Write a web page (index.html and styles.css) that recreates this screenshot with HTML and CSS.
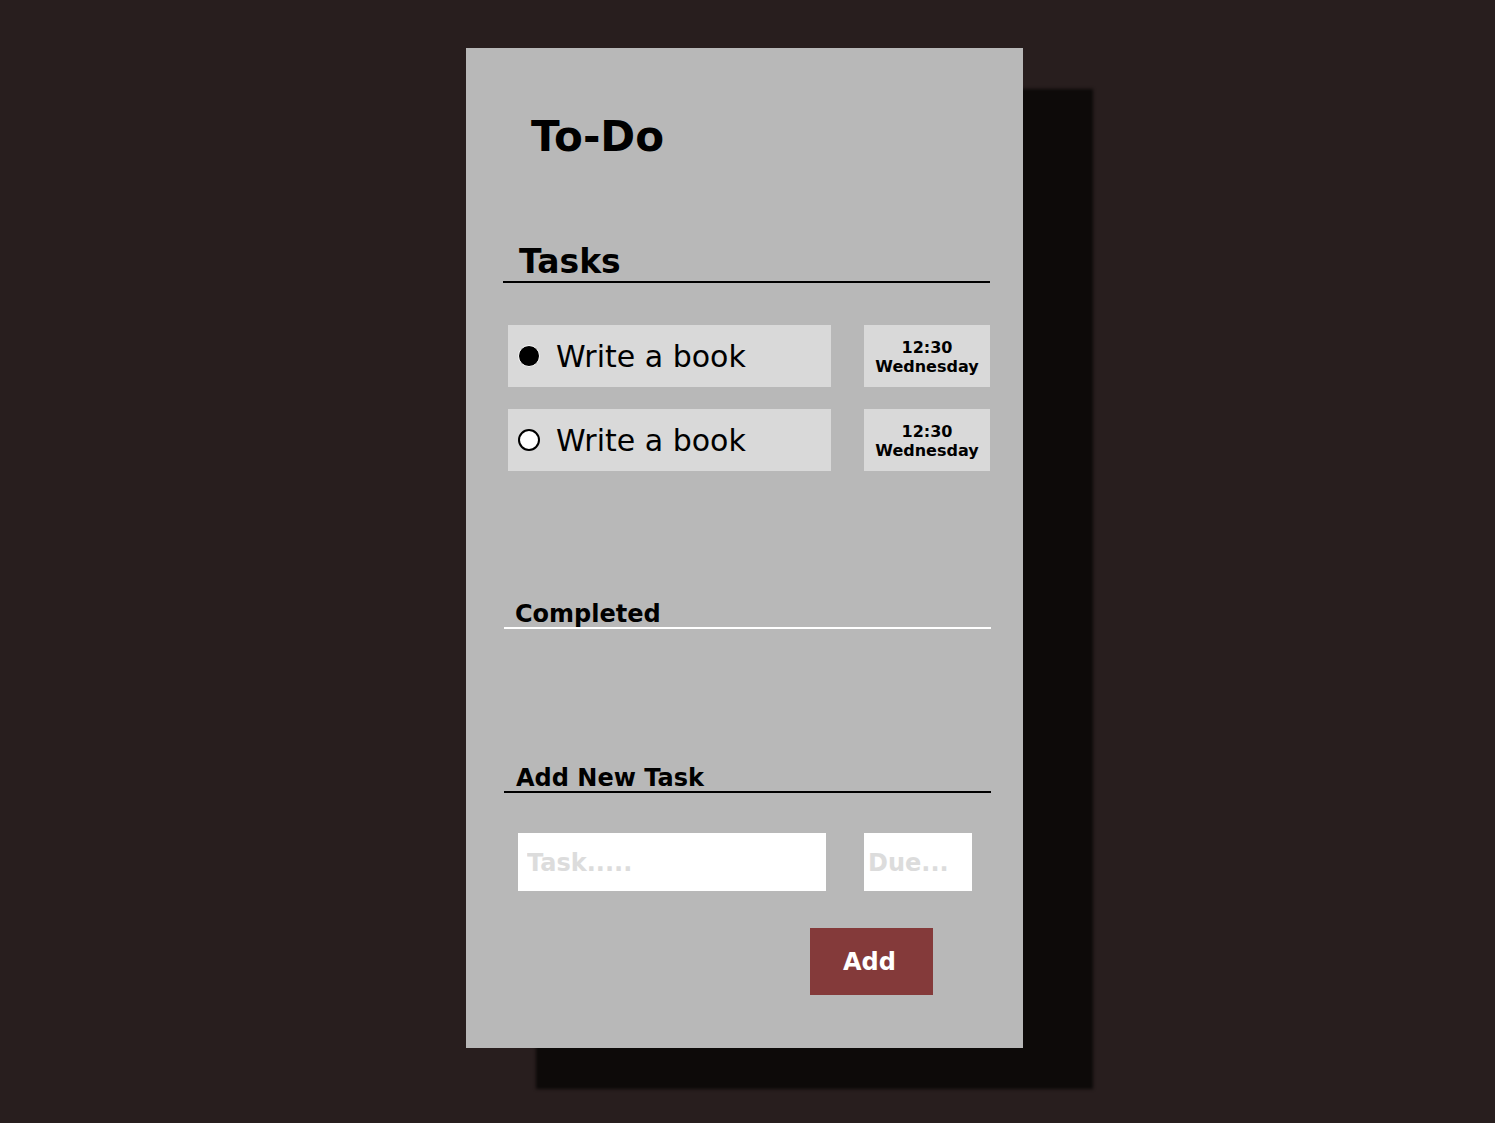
FILE: index.html
```html
<!DOCTYPE html>
<html lang="en">
<head>
<meta charset="utf-8">
<title>To-Do</title>
<link rel="stylesheet" href="styles.css">
</head>
<body>
<main class="card">
  <h1 class="title">To-Do</h1>

  <section class="section tasks">
    <h2 class="heading heading-large">Tasks</h2>
    <ul class="task-list">
      <li class="task-row">
        <div class="task-main">
          <span class="radio radio-filled"></span>
          <span class="task-name">Write a book</span>
        </div>
        <div class="task-due">
          <span>12:30</span>
          <span>Wednesday</span>
        </div>
      </li>
      <li class="task-row">
        <div class="task-main">
          <span class="radio radio-empty"></span>
          <span class="task-name">Write a book</span>
        </div>
        <div class="task-due">
          <span>12:30</span>
          <span>Wednesday</span>
        </div>
      </li>
    </ul>
  </section>

  <section class="section completed">
    <h2 class="heading heading-small heading-white">Completed</h2>
  </section>

  <section class="section add">
    <h2 class="heading heading-small heading-add">Add New Task</h2>
    <form class="add-form">
      <div class="inputs">
        <input class="input input-task" type="text" placeholder="Task.....">
        <input class="input input-due" type="text" placeholder="Due...">
      </div>
      <button class="add-btn" type="button">Add</button>
    </form>
  </section>
</main>
</body>
</html>
```

FILE: styles.css
```css
* {
  box-sizing: border-box;
}

html, body {
  margin: 0;
  padding: 0;
}

body {
  background: #281e1e;
  font-family: "DejaVu Sans", Verdana, sans-serif;
  color: #000;
  min-height: 1123px;
  padding: 48px 0 0 466px;
}

.card {
  width: 557px;
  height: 1000px;
  background: #b8b8b8;
  box-shadow: 70px 41px 3px #0d0a09;
  padding: 65px 33px 0 37px;
}

.title {
  margin: 0;
  font-size: 42px;
  line-height: 48px;
  font-weight: bold;
  padding-left: 28px;
}

.section {
  margin: 0;
}

.heading {
  margin: 0;
  font-weight: bold;
}

.heading-large {
  margin-top: 82px;
  font-size: 33px;
  line-height: 38px;
  padding-left: 16px;
  border-bottom: 2px solid #000;
}

.heading-small {
  font-size: 24px;
  margin-left: 1px;
  margin-right: -1px;
  padding-left: 11px;
}

.heading-white {
  margin-top: 131px;
  line-height: 25px;
  border-bottom: 2px solid #fff;
}

.heading-add {
  margin-top: 136px;
  line-height: 26px;
  padding-left: 12px;
  border-bottom: 2px solid #000;
}

.task-list {
  list-style: none;
  margin: 42px 0 0 5px;
  padding: 0;
  display: flex;
  flex-direction: column;
  gap: 22px;
}

.task-row {
  display: flex;
  gap: 33px;
  height: 62px;
}

.task-main {
  width: 323px;
  background: #d9d9d9;
  display: flex;
  align-items: center;
  padding-left: 10px;
  gap: 16px;
}

.radio {
  width: 22px;
  height: 22px;
  border-radius: 50%;
  flex: none;
}

.radio-filled {
  background: #000;
  border: 1.5px solid #fff;
}

.radio-empty {
  background: #fff;
  border: 2px solid #000;
}

.task-name {
  font-size: 30px;
  line-height: 36px;
  padding-top: 2px;
}

.task-due {
  width: 126px;
  background: #d9d9d9;
  display: flex;
  flex-direction: column;
  align-items: center;
  justify-content: center;
  font-size: 16px;
  font-weight: bold;
  line-height: 19px;
  padding-top: 2px;
}

.add-form {
  margin: 40px 0 0 0;
}

.inputs {
  display: flex;
  gap: 38px;
  padding-left: 15px;
}

.input {
  height: 58px;
  border: none;
  outline: none;
  background: #fff;
  font-family: "DejaVu Sans", Verdana, sans-serif;
  font-size: 24px;
  font-weight: bold;
  padding: 2px 0 0 9px;
  margin: 0;
  color: #000;
}

.input::placeholder {
  color: #dcdcdc;
  opacity: 1;
}

.input-task {
  width: 308px;
}

.input-due {
  width: 108px;
  padding-left: 4px;
}

.add-btn {
  display: block;
  margin: 37px 0 0 307px;
  width: 123px;
  height: 67px;
  border: none;
  background: #843a3a;
  color: #fff;
  font-family: "DejaVu Sans", Verdana, sans-serif;
  font-size: 24px;
  font-weight: bold;
  padding: 0 4px 0 0;
  cursor: pointer;
}
```
